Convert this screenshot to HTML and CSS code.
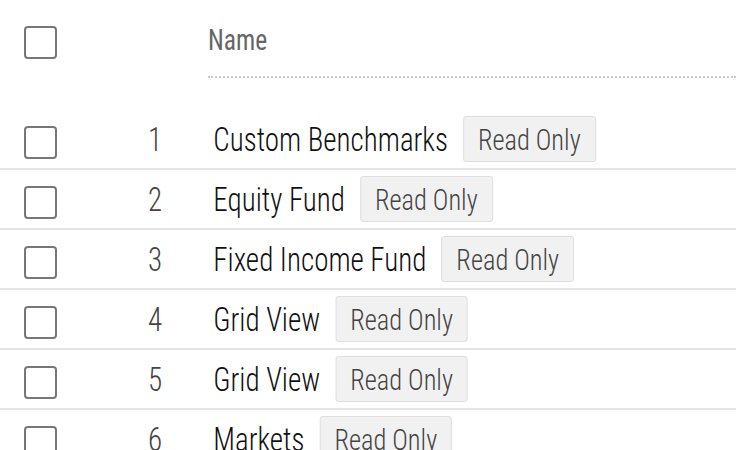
FILE: index.html
```html
<!DOCTYPE html>
<html>
<head>
<meta charset="utf-8">
<link rel="stylesheet" href="styles.css">
</head>
<body>
<div class="table">
  <div class="head">
    <div class="c-check"><span class="box"></span></div>
    <div class="c-num"></div>
    <div class="c-name head-name"><span class="squeeze">Name</span></div>
  </div>
  <div class="rows">
    <div class="row">
      <div class="c-check"><span class="box"></span></div>
      <div class="c-num"><span class="num">1</span></div>
      <div class="c-name"><div class="squeeze"><span class="label">Custom Benchmarks</span><span class="badge">Read Only</span></div></div>
    </div>
    <div class="row">
      <div class="c-check"><span class="box"></span></div>
      <div class="c-num"><span class="num">2</span></div>
      <div class="c-name"><div class="squeeze"><span class="label">Equity Fund</span><span class="badge">Read Only</span></div></div>
    </div>
    <div class="row">
      <div class="c-check"><span class="box"></span></div>
      <div class="c-num"><span class="num">3</span></div>
      <div class="c-name"><div class="squeeze"><span class="label">Fixed Income Fund</span><span class="badge">Read Only</span></div></div>
    </div>
    <div class="row">
      <div class="c-check"><span class="box"></span></div>
      <div class="c-num"><span class="num">4</span></div>
      <div class="c-name"><div class="squeeze"><span class="label">Grid View</span><span class="badge">Read Only</span></div></div>
    </div>
    <div class="row">
      <div class="c-check"><span class="box"></span></div>
      <div class="c-num"><span class="num">5</span></div>
      <div class="c-name"><div class="squeeze"><span class="label">Grid View</span><span class="badge">Read Only</span></div></div>
    </div>
    <div class="row">
      <div class="c-check"><span class="box"></span></div>
      <div class="c-num"><span class="num">6</span></div>
      <div class="c-name"><div class="squeeze"><span class="label">Markets</span><span class="badge">Read Only</span></div></div>
    </div>
  </div>
</div>
</body>
</html>
```

FILE: styles.css
```css
html, body {
  margin: 0;
  padding: 0;
  background: #fff;
}
body {
  font-family: "Roboto Condensed", "Liberation Sans Narrow", "Roboto", sans-serif;
  overflow: hidden;
  width: 736px;
  height: 450px;
}
.table {
  display: flex;
  flex-direction: column;
}
.head {
  display: flex;
  height: 78px;
  margin-bottom: 32px;
}
.head .c-check {
  padding-top: 26px;
}
.c-check {
  width: 100px;
  padding-left: 24px;
  box-sizing: border-box;
  flex: none;
}
.box {
  display: block;
  width: 33px;
  height: 33px;
  box-sizing: border-box;
  border: 2px solid #777;
  border-radius: 4px;
  background: #fff;
}
.c-num {
  width: 62px;
  flex: none;
  text-align: right;
  font-size: 33px;
  font-weight: 300;
  color: #444;
}
.num {
  display: inline-block;
  transform: scaleX(0.88);
  transform-origin: right center;
}
.c-name {
  margin-left: 46px;
  flex: 1;
  display: flex;
  align-items: center;
}
.squeeze {
  display: flex;
  align-items: center;
  transform: scaleX(0.88);
  transform-origin: left center;
}
.head-name {
  border-bottom: 2px dotted #ccc;
  font-size: 29px;
  color: #666;
  align-items: flex-start;
  padding-top: 24px;
  box-sizing: border-box;
  line-height: 33px;
}
.row {
  display: flex;
  align-items: center;
  height: 60px;
  box-sizing: border-box;
  border-bottom: 2px solid #e4e4e4;
}
.row .c-check {
  align-self: flex-start;
  padding-top: 16px;
}
.label {
  margin-left: 6px;
  font-size: 33px;
  font-weight: 300;
  color: #111;
}
.badge {
  margin-left: 17px;
  height: 46px;
  box-sizing: border-box;
  padding: 0 16px;
  display: flex;
  align-items: center;
  background: #f1f1f1;
  border: 1px solid #ddd;
  border-radius: 3px;
  font-size: 30px;
  font-weight: 300;
  color: #444;
}
```
